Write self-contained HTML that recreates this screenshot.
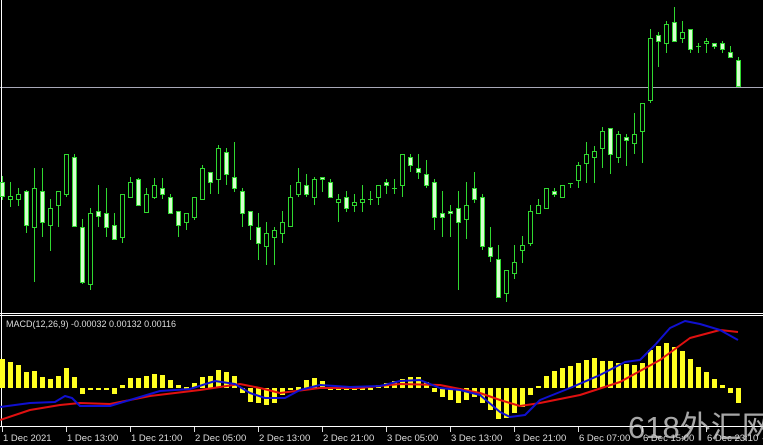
<!DOCTYPE html>
<html><head><meta charset="utf-8"><style>
html,body{margin:0;padding:0;background:#000;width:763px;height:445px;overflow:hidden}
svg{display:block}
text{font-family:"Liberation Sans",sans-serif}
</style></head><body>
<svg id="s" width="763" height="445" xmlns="http://www.w3.org/2000/svg">
<rect width="763" height="445" fill="#000"/>
<line x1="0" y1="87.5" x2="763" y2="87.5" stroke="#a8a8b8" stroke-width="1"/>
<line x1="1.5" y1="0" x2="1.5" y2="427" stroke="#fff"/>
<line x1="0" y1="313.5" x2="763" y2="313.5" stroke="#fff"/>
<line x1="0" y1="315.5" x2="763" y2="315.5" stroke="#fff"/>
<line x1="0" y1="426.5" x2="763" y2="426.5" stroke="#fff"/>
<g id="c"></g><g id="h"></g>
<polyline fill="none" stroke="#e01010" stroke-width="2" stroke-linejoin="round" points="0,420 30,410 60,405 80,403 110,404 150,396 200,390 240,384 260,388 280,393 320,388 360,388 400,384 440,385 480,393 500,400 520,406 540,403 580,395 620,382 660,360 690,338 720,330 738,332"/>
<polyline fill="none" stroke="#1010d0" stroke-width="2" stroke-linejoin="round" points="0,407 30,403 55,402 65,396 72,398 80,406 110,406 130,400 160,391 190,389 215,381 235,384 250,393 265,398 285,398 300,390 320,385 350,387 380,386 400,381 420,380 440,388 460,390 480,395 500,412 510,417 525,415 540,400 570,388 600,375 625,362 640,360 655,345 670,328 685,321 700,324 720,330 738,340"/>
<text x="6" y="327" fill="#ddd" font-size="9">MACD(12,26,9) -0.00032 0.00132 0.00116</text>
<g id="ax" fill="#ddd" font-size="9.5"></g>
<text x="628" y="438" fill="#d0d0d0" fill-opacity="0.8" font-size="31" font-family="'Liberation Sans','Noto Sans CJK SC',sans-serif">618外汇网</text>
</svg>
<script>
var C=[[176,182,196,200,1],[182,196,199,207,0],[188,194,199,206,0],[190,191,225,233,1],[168,188,227,282,0],[168,191,222,237,1],[199,208,225,251,0],[191,191,205,227,0],[154,154,194,197,0],[154,157,226,227,1],
[219,227,282,284,1],[208,213,284,290,0],[185,211,216,227,1],[188,213,227,237,1],[213,225,239,239,1],[194,194,237,243,0],[177,182,197,197,0],[178,179,205,205,1],[188,194,212,213,0],[178,185,197,199,0],
[178,188,194,199,1],[194,197,213,213,1],[211,211,225,237,1],[213,213,222,230,0],[197,197,217,220,0],[165,168,199,199,0],[172,172,182,194,1],[145,148,179,194,0],[148,152,174,185,1],[142,177,188,192,1],
[188,191,213,227,1],[211,211,225,240,1],[213,227,243,260,1],[222,233,246,265,0],[227,230,237,265,0],[211,222,233,243,0],[185,197,226,227,0],[168,182,194,197,0],[174,185,194,197,1],[177,179,197,205,0],
[177,177,179,192,1],[179,182,197,197,1],[194,199,202,222,0],[191,197,208,212,1],[194,202,205,212,0],[185,199,202,212,0],[191,199,199,205,0],[185,185,197,205,0],[179,182,185,194,1],[179,188,188,194,0],
[154,154,185,197,0],[154,157,165,172,1],[154,168,172,179,1],[160,174,185,188,1],[179,182,217,230,1],[191,213,217,237,1],[205,211,213,237,1],[191,208,222,290,1],[182,205,219,239,0],[172,188,199,203,1],
[194,197,246,250,1],[227,247,256,262,1],[245,259,297,298,1],[270,270,293,302,0],[245,262,273,279,0],[236,245,250,263,0],[205,211,243,246,0],[199,205,213,213,0],[188,188,208,208,0],[188,191,194,197,1],
[185,185,197,197,0],[183,183,183,188,0],[162,165,180,188,0],[142,154,163,183,0],[146,151,157,183,0],[127,131,148,168,0],[128,128,154,174,1],[131,134,157,163,0],[134,137,140,166,1],[113,134,143,154,0],
[103,103,131,163,0],[29,38,100,103,0],[32,35,41,67,1],[21,24,43,53,0],[7,22,41,41,1],[21,32,38,43,0],[29,29,49,53,1],[43,46,46,53,0],[38,41,43,53,0],[43,43,46,49,1],
[41,43,49,53,1],[46,52,57,57,1],[57,60,86,86,1]];
var H=[359,362,365,372,371,377,379,376,368,377,394,390,390,390,394,385,378,378,376,374,375,380,385,387,383,377,376,370,372,376,
393,402,403,405,403,395,390,387,380,378,381,390,390,390,390,390,390,385,383,381,379,377,377,382,392,397,400,403,400,397,
403,410,419,418,413,407,395,386,376,371,368,366,363,360,358,361,361,363,364,365,363,350,346,343,347,351,359,367,372,379,385,393,403];
var g=document.getElementById('c'),s='';
C.forEach(function(c,k){var x=2+8*k;
s+='<line x1="'+(x+.5)+'" y1="'+c[0]+'" x2="'+(x+.5)+'" y2="'+c[3]+'" stroke="#30d830"/>';
var hgt=Math.max(c[2]-c[1],1);
if(hgt<=1)s+='<line x1="'+(x-2)+'" y1="'+(c[1]+.5)+'" x2="'+(x+3)+'" y2="'+(c[1]+.5)+'" stroke="#30d830"/>';
else s+='<rect x="'+(x-1.5)+'" y="'+(c[1]+.5)+'" width="4" height="'+hgt+'" fill="'+(c[4]?'#d8ffd0':'#000')+'" stroke="#30d830"/>';});
g.innerHTML=s;s='';
H.forEach(function(v,k){var x=2+8*k-2;var a=Math.min(v,388),b=Math.max(v,388);if(b-a<2){a=387;b=390;}
s+='<rect x="'+x+'" y="'+a+'" width="5" height="'+(b-a)+'" fill="#ffff20"/>';});
document.getElementById('h').innerHTML=s;
var L=["1 Dec 2021","1 Dec 13:00","1 Dec 21:00","2 Dec 05:00","2 Dec 13:00","2 Dec 21:00","3 Dec 05:00","3 Dec 13:00","3 Dec 21:00","6 Dec 07:00","6 Dec 15:00","6 Dec 23:10"];
s='';L.forEach(function(t,i){var x=2+64*i;s+='<line x1="'+(x+.5)+'" y1="427" x2="'+(x+.5)+'" y2="432" stroke="#ddd"/><text x="'+(x+1)+'" y="441">'+t+'</text>';});
document.getElementById('ax').innerHTML=s;
</script>
</body></html>
